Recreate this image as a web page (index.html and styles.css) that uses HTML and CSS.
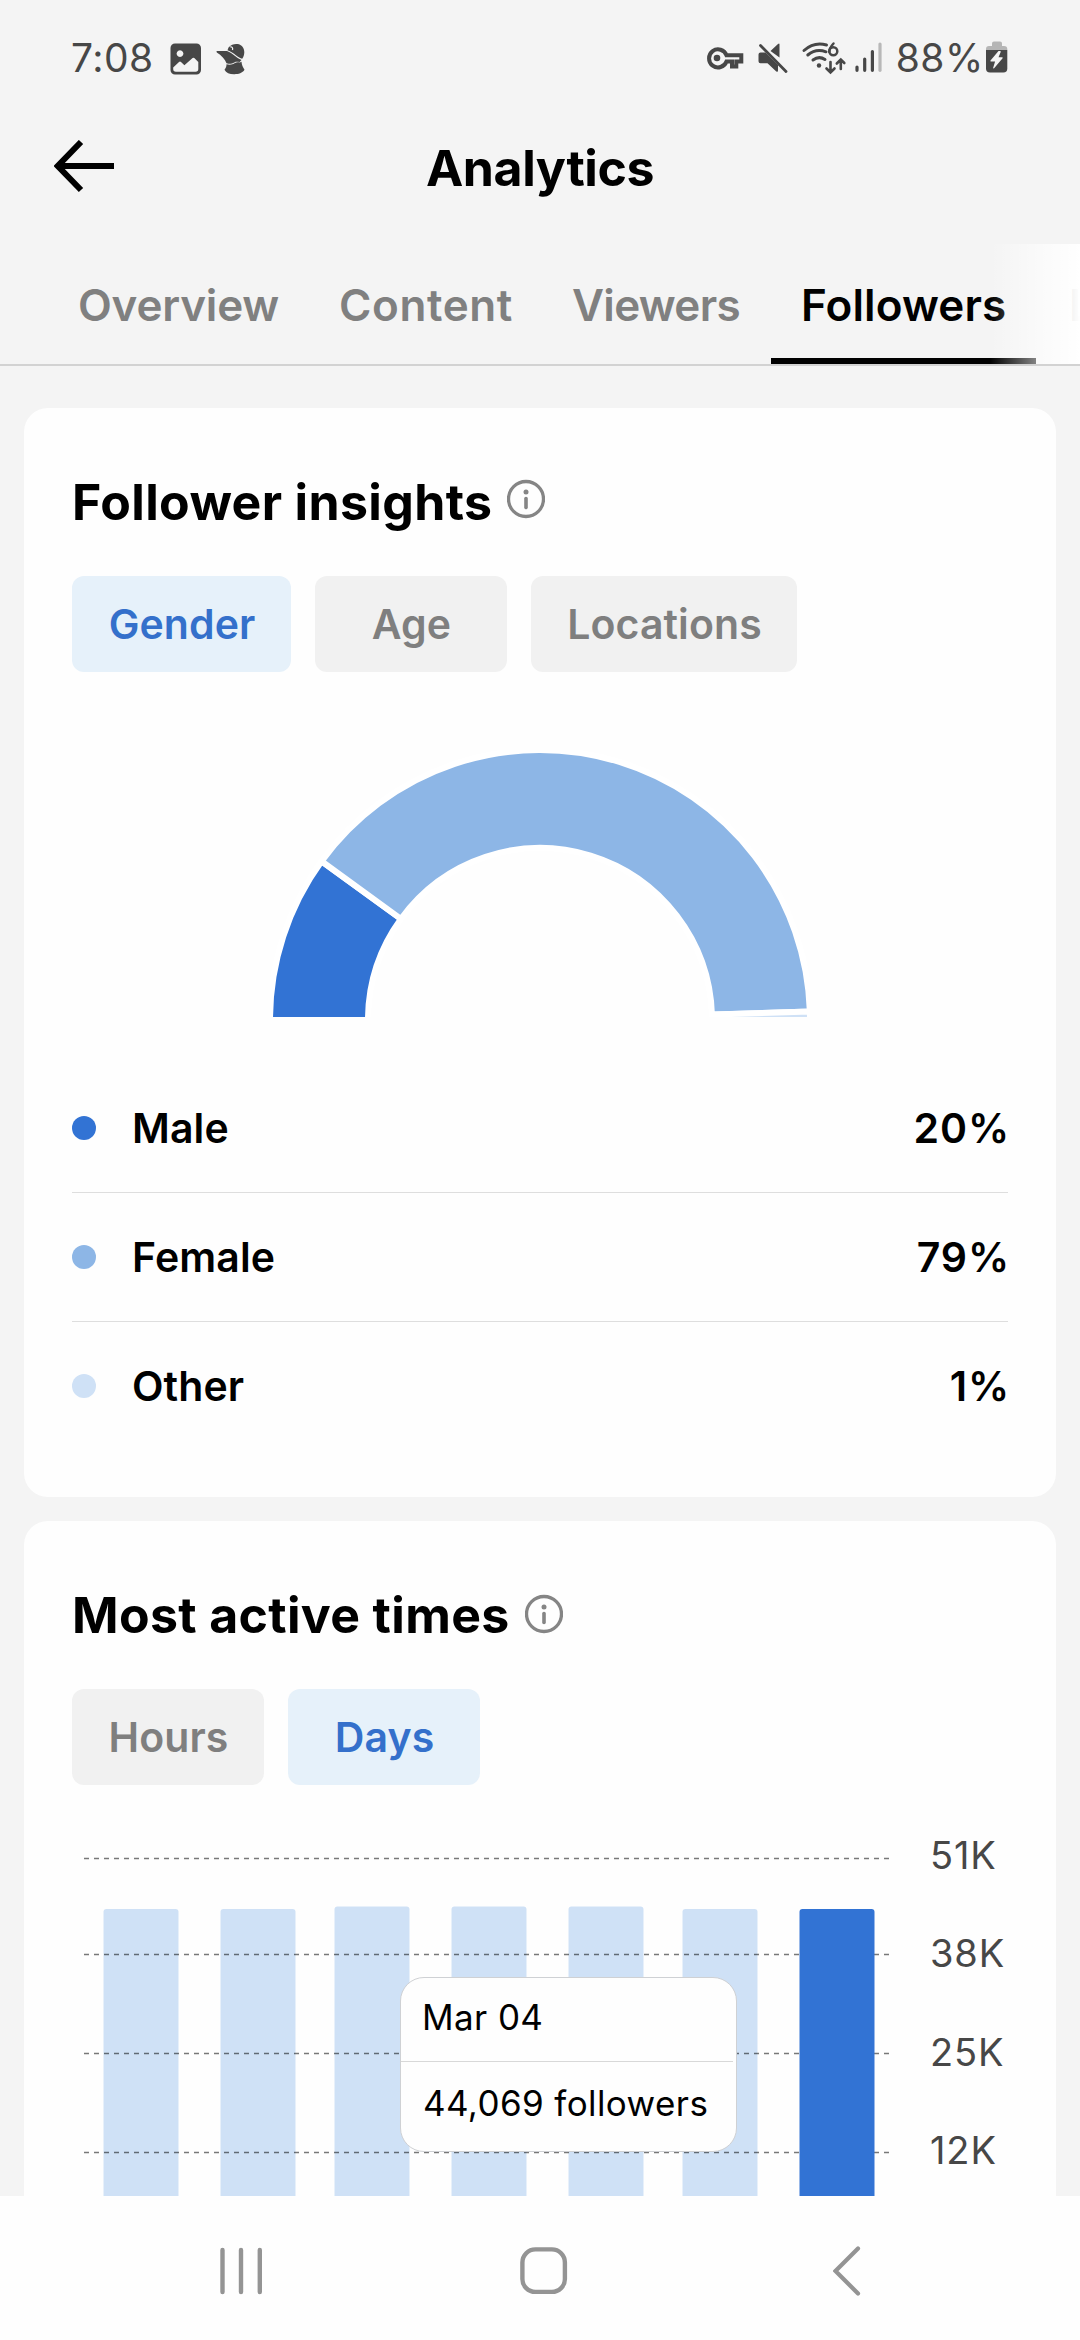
FILE: index.html
```
<!DOCTYPE html>
<html lang="en">
<head>
<meta charset="utf-8">
<title>Analytics</title>
<link rel="stylesheet" href="styles.css">
</head>
<body>
<div class="screen">
  <div class="app">
    <div class="status">
      <div class="status-left">
        <span class="clock">7:08</span>
        <svg class="ico-picture" width="32" height="32" viewBox="0 0 32 32">
          <path fill-rule="evenodd" fill="#474747" d="M5 .5h21.500a4.500 4.500 0 0 1 4.500 4.500v22a4.500 4.500 0 0 1-4.500 4.500h-21.500a4.500 4.500 0 0 1-4.500-4.500v-22a4.500 4.500 0 0 1 4.500-4.500zM10 7.200a3.400 3.400 0 1 0 .01 0zM3.200 24.500v1.500a2.700 2.700 0 0 0 2.700 2.700h19.700a2.700 2.700 0 0 0 2.700-2.700v-7l-4-4q-.9-.7-1.700 0l-8.200 7.300-3.400-3.400q-1-.8-2 0z"/>
        </svg>
        <svg class="ico-hat" width="30" height="32" viewBox="0 0 30 32">
          <g fill="#474747">
            <path d="M12.500 4.500C15 1.600 18.500.6 21.500 1c4.300.6 6.900 4 6.800 8.300-.1 2.700-.9 4.900-2.100 6.500C22.500 15.300 18 9.500 11.500 7.300z"/>
            <path d="M.5 8 11 8C17 10 20 15 25.500 17l-1.800 2-1.700-.2c-2-.4-3 .1-4.300 1-2.500 1.400-4 1.200-7.200.5C9 16.500 5.500 12 .8 9.500z"/>
            <path d="M10.500 21.300c3.500.7 6 .3 8.500-1.200 1.500-1 3-1 4.800-.5l1.700-.8c.3 3 1.300 5.500 3 8-2 3.500-6.500 4.500-10.500 4.400-4.500 0-8-1.400-9.500-4.500 1.300-1.400 2-3 2-5.400z"/>
          </g>
          <path d="M14.300 3.800c1.800-.2 2.800 1 2.200 3.200" fill="none" stroke="#f4f4f4" stroke-width="1.200"/>
        </svg>
      </div>
      <div class="status-right">
        <svg width="254" height="36" viewBox="704 39 254 36">
          <path fill="none" stroke="#474747" stroke-width="4" d="M727.500 55.300H740.300V61.500H735.300V66.500H731V61.500H725.500A9 9 0 1 1 725.500 55.300z"/>
          <circle cx="716" cy="58" r="3.300" fill="#474747"/>
          <path fill="#474747" d="M757.500 54.500q0-2 2-2h5l12.500 12.500v5.500q0 2.300-2 .7l-8.500-8h-7q-2 0-2-2zM769.500 51l7.500-7q1.500-1.200 1.500.5v13z"/>
          <path d="M759.500 45.500 785 71.500" stroke="#474747" stroke-width="2.800" stroke-linecap="round"/>
          <g fill="none" stroke="#474747" stroke-width="3" stroke-linecap="round">
            <path d="M803 50.500Q813 41.500 825.500 45M806.800 55Q815 48 825 51.800M812 60Q818 55.500 824 59.500"/>
            <path d="M832.500 43.500Q828 48.500 828.300 52" stroke-width="2.500"/>
            <circle cx="832.300" cy="51.300" r="4" stroke-width="2.500"/>
            <path d="M829.500 62V72M825.500 68.500 829.500 72.500 833.500 68.500M839.800 69V59.500M835.800 63.500 839.800 59.500 843.300 63" stroke-width="2.600"/>
          </g>
          <circle cx="818" cy="65.500" r="2.200" fill="#474747"/>
          <g stroke-width="3.200" stroke-linecap="round" stroke="#474747">
            <path d="M856 67V70.300M863.700 59V70.300M871.400 51.500V70.300"/>
            <path d="M879 44V70.300" stroke="#b8b8b8"/>
          </g>
        </svg>
        <span class="charge">88%</span>
        <svg width="22" height="32" viewBox="0 0 22 32">
          <path fill="#b5b5b5" d="M0 9V8q0-3 3-3h3V2.500q0-2 2-2h6q2 0 2 2V5h2q3.300 0 3.300 3v1z"/>
          <path fill="#474747" d="M0 9h21.300v18.500q0 4-4 4h-13.300q-4 0-4-4z"/>
          <path fill="#f4f4f4" d="M12.500 10 4.500 19.500q-.6 1 .6 1h4l-2 6.500q.3.800 1 .2l8.500-10q.5-1-.6-1h-3.500l2.300-5.500q0-1-1.300-.7z"/>
        </svg>
      </div>
    </div>

    <header class="header">
      <svg class="back" width="62" height="56" viewBox="0 0 62 56" fill="none" stroke="#000" stroke-width="6">
        <path d="M60 26H4"/><path d="M27 2 3.800 26 27 50"/>
      </svg>
      <h1 class="title">Analytics</h1>
    </header>

    <nav class="tabs">
      <a class="tab tab-overview">Overview</a>
      <a class="tab tab-content">Content</a>
      <a class="tab tab-viewers">Viewers</a>
      <a class="tab tab-active">Followers</a>
      <a class="tab tab-next">LIVE</a>
      <div class="tabs-fade"></div>
    </nav>

    <main class="cards">
      <section class="card">
        <h2 class="card-title">Follower insights
          <svg class="info info-raised" width="38" height="40" viewBox="0 0 38 40"><circle cx="19" cy="20" r="17.500" fill="none" stroke="#858585" stroke-width="3.300"/><circle cx="19" cy="13" r="2.500" fill="#858585"/><path d="M19 19.500v9" stroke="#858585" stroke-width="3.600" stroke-linecap="round"/></svg>
        </h2>
        <div class="chips">
          <button class="chip chip-gender chip-on">Gender</button>
          <button class="chip">Age</button>
          <button class="chip chip-locations">Locations</button>
        </div>
        <svg class="donut" width="540" height="267" viewBox="0 0 540 267">
          <g stroke="#fff" stroke-width="6">
            <path fill="#3273d4" d="M0 270A270 270 0 0 1 51.570 111.300L130.850 168.900A172 172 0 0 0 98 270z"/>
            <path fill="#8db6e6" d="M51.570 111.300A270 270 0 0 1 539.870 261.520L441.920 264.600A172 172 0 0 0 130.850 168.900z"/>
            <path fill="#cfe1f6" d="M539.870 261.520A270 270 0 0 1 540 270H442A172 172 0 0 0 441.920 264.600z"/>
          </g>
        </svg>
        <ul class="legend">
          <li class="legend-row"><i class="dot dot-male"></i>Male<b class="value">20%</b></li>
          <li class="legend-row"><i class="dot dot-female"></i>Female<b class="value">79%</b></li>
          <li class="legend-row"><i class="dot dot-other"></i>Other<b class="value">1%</b></li>
        </ul>
      </section>

      <section class="card">
        <h2 class="card-title">Most active times
          <svg class="info" width="38" height="40" viewBox="0 0 38 40"><circle cx="19" cy="20" r="17.500" fill="none" stroke="#858585" stroke-width="3.300"/><circle cx="19" cy="13" r="2.500" fill="#858585"/><path d="M19 19.500v9" stroke="#858585" stroke-width="3.600" stroke-linecap="round"/></svg>
        </h2>
        <div class="chips">
          <button class="chip">Hours</button>
          <button class="chip chip-on">Days</button>
        </div>
        <div class="chart">
          <svg class="plot" width="820" height="411" viewBox="72 1785 820 411">
            <g fill="#cfe1f6">
              <rect x="103.500" y="1909" width="75" height="320" rx="3"/>
              <rect x="220.500" y="1909" width="75" height="320" rx="3"/>
              <rect x="334.500" y="1906.500" width="75" height="320" rx="3"/>
              <rect x="451.500" y="1906.500" width="75" height="320" rx="3"/>
              <rect x="568.500" y="1906.500" width="75" height="320" rx="3"/>
              <rect x="682.500" y="1909" width="75" height="320" rx="3"/>
            </g>
            <path d="M84 1858.500H890M84 1954.500H890M84 2053.500H890M84 2152.500H890" stroke="#000" stroke-opacity=".53" stroke-width="1.500" stroke-dasharray="5 5"/>
            <rect x="799.500" y="1909" width="75" height="320" rx="3" fill="#3273d4"/>
          </svg>
          <div class="axis"><span>51K</span><span>38K</span><span>25K</span><span>12K</span></div>
          <div class="tooltip">
            <div class="tooltip-date">Mar 04</div>
            <div class="tooltip-value">44,069 followers</div>
          </div>
        </div>
      </section>
    </main>
  </div>

  <div class="navbar">
    <svg width="42" height="48" viewBox="0 0 42 48" stroke="#949494" stroke-width="4.400" stroke-linecap="round"><path d="M2.500 3V45M21 3V45M39.800 3V45"/></svg>
    <svg class="home" width="48" height="48" viewBox="0 0 48 48" fill="none" stroke="#949494" stroke-width="4.400"><rect x="2.400" y="2.400" width="42.500" height="42.500" rx="13"/></svg>
    <svg width="28" height="50" viewBox="0 0 28 50" fill="none" stroke="#949494" stroke-width="4.200" stroke-linecap="round"><path d="M25 2.500 2.500 25 25 47.500"/></svg>
  </div>
</div>
</body>
</html>
```

FILE: styles.css
```
* { box-sizing: border-box; }

body {
  margin: 0;
  background: #f4f4f4;
  color: #000;
  font-family: Inter, "Noto Sans", sans-serif;
}

svg { display: block; flex: none; }

.screen {
  width: 1080px;
  height: 2340px;
  display: flex;
  flex-direction: column;
  overflow: hidden;
}

.app {
  height: 2196px;
  overflow: hidden;
}

/* Status bar */
.status {
  height: 114px;
  padding: 0 72px 0 71px;
  display: flex;
  align-items: center;
  justify-content: space-between;
  color: #474747;
  font-size: 39px;
  font-weight: 370;
}

.status-left,
.status-right {
  display: flex;
  align-items: center;
}

.clock { letter-spacing: .5px; }
.ico-picture { margin: 4px 0 0 16px; }
.ico-hat { margin: 4px 0 0 14px; }
.charge { margin-left: -63px; letter-spacing: .6px; }
.status-right svg:last-child { margin-left: 2px; }

/* Title bar */
.header {
  height: 108px;
  margin-bottom: 22px;
  padding: 0 54px;
  display: grid;
  grid-template-columns: 62px 1fr 62px;
  align-items: center;
}

.title {
  margin: 0;
  text-align: center;
  font-size: 50px;
  line-height: 60px;
  font-weight: 680;
  letter-spacing: -.4px;
}

/* Tabs */
.tabs {
  position: relative;
  height: 122px;
  padding-left: 48px;
  display: grid;
  grid-template-columns: 261px 232px 230px 265px 44px;
  overflow: hidden;
  border-bottom: 2px solid #d2d2d2;
}

.tab {
  height: 120px;
  padding-left: 30px;
  color: #808080;
  font-size: 44px;
  line-height: 122px;
  font-weight: 570;
}

.tab-overview { letter-spacing: -.2px; }
.tab-content { letter-spacing: .6px; }

.tab-viewers {
  padding-left: 31px;
  letter-spacing: -.7px;
}

.tab-active {
  color: #000;
  letter-spacing: .1px;
  border-bottom: 6px solid #000;
}

.tab-next { padding-left: 33px; }

.tabs-fade {
  position: absolute;
  top: 0;
  right: 0;
  width: 90px;
  height: 120px;
  background: linear-gradient(to right, rgba(255, 255, 255, 0), #fff);
}

/* Cards */
.cards {
  padding: 42px 24px 0;
  display: grid;
  gap: 24px;
}

.card {
  padding: 64px 48px 47px;
  border-radius: 24px;
  background: #fefefe;
}

.card-title {
  height: 60px;
  margin: 0 0 44px;
  display: flex;
  align-items: center;
  gap: 15px;
  font-size: 50px;
  line-height: 60px;
  font-weight: 680;
  letter-spacing: .35px;
}

.info { margin-bottom: 3px; }
.info-raised { margin-bottom: 7px; }

.chips {
  display: flex;
  gap: 24px;
}

.chip {
  width: 192px;
  height: 96px;
  padding: 0 0 0 1px;
  border: 0;
  border-radius: 12px;
  background: #f1f1f1;
  color: #7f7f7f;
  font: 570 41px/96px Inter, "Noto Sans", sans-serif;
  letter-spacing: .1px;
  text-align: center;
}

.chip-gender { width: 219px; }
.chip-locations { width: 266px; }

.chip-on {
  background: #e6f1fa;
  color: #3470cb;
}

.donut { margin: 78px auto 0; }

/* Legend */
.legend {
  margin: 47px 0 0;
  padding: 0;
  list-style: none;
}

.legend-row {
  height: 129px;
  display: flex;
  align-items: center;
  border-bottom: 1px solid #dedede;
  font-size: 41px;
  font-weight: 570;
  letter-spacing: .1px;
}

.legend-row:last-child {
  height: 128px;
  border-bottom: 0;
}

.dot {
  width: 24px;
  height: 24px;
  margin-right: 36px;
  border-radius: 50%;
}

.dot-male { background: #3273d4; }
.dot-female { background: #8db6e6; }
.dot-other { background: #cfe1f6; }

.value {
  margin: 0 -2px 0 auto;
  font-weight: 570;
  letter-spacing: .9px;
}

/* Active times chart */
.chart {
  position: relative;
  height: 444px;
  display: flex;
}

.axis {
  padding: 21px 0 0 38px;
  color: #474747;
  font-size: 38px;
  line-height: 98.4px;
  letter-spacing: .9px;
}

.axis span { display: block; }

.tooltip {
  position: absolute;
  left: 328px;
  top: 192px;
  width: 337px;
  height: 175px;
  border: 1px solid #cfd1d4;
  border-radius: 24px;
  background: #fefefe;
  font-size: 35px;
  letter-spacing: .4px;
}

.tooltip-date {
  height: 84px;
  margin-right: 3px;
  padding-left: 21px;
  border-bottom: 1px solid #d8d8d8;
  line-height: 79px;
}

.tooltip-value {
  padding-left: 22px;
  line-height: 83px;
}

/* System navigation */
.navbar {
  height: 144px;
  padding: 5px 219px 0 220px;
  display: flex;
  align-items: center;
  justify-content: space-between;
  background: #fefefe;
}

.home { margin-right: 8px; }
```
